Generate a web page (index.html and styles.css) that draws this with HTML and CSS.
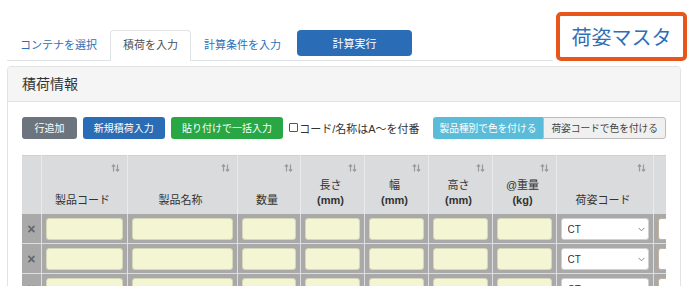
FILE: index.html
```html
<!DOCTYPE html>
<html lang="ja">
<head>
    <meta charset="UTF-8">
    <meta name="viewport" content="width=device-width, initial-scale=1.0">
    <title>積荷を入力</title>
    <link rel="stylesheet" href="styles.css">
</head>
<body>
    <div class="page">
        <div class="top-row">
            <ul class="nav-tabs">
                <li class="tab">コンテナを選択</li>
                <li class="tab active">積荷を入力</li>
                <li class="tab">計算条件を入力</li>
                <li><button class="btn-run">計算実行</button></li>
            </ul>
            <a class="master-link">荷姿マスタ</a>
        </div>

        <div class="card">
            <div class="card-header">積荷情報</div>
            <div class="card-body">
                <div class="toolbar">
                    <button class="btn btn-gray">行追加</button>
                    <button class="btn btn-blue">新規積荷入力</button>
                    <button class="btn btn-green">貼り付けで一括入力</button>
                    <label class="check-label"><input type="checkbox" class="check">コード/名称はA～を付番</label>
                    <div class="btn-group">
                        <button class="btn btn-teal">製品種別で色を付ける</button>
                        <button class="btn btn-light">荷姿コードで色を付ける</button>
                    </div>
                </div>

                <div class="table-wrap">
                    <table class="cargo">
                        <colgroup>
                            <col style="width:19px">
                            <col style="width:86px">
                            <col style="width:110px">
                            <col style="width:63px">
                            <col style="width:64px">
                            <col style="width:64px">
                            <col style="width:64px">
                            <col style="width:64px">
                            <col style="width:97px">
                            <col style="width:80px">
                        </colgroup>
                        <thead>
                            <tr id="head-row"></tr>
                        </thead>
                        <tbody id="cargo-body"></tbody>
                    </table>
                </div>
            </div>
        </div>
    </div>

    <script>
        // 見出し
        const columnas = [
            '', '製品コード', '製品名称', '数量',
            '長さ<br><b>(mm)</b>', '幅<br><b>(mm)</b>', '高さ<br><b>(mm)</b>',
            '@重量<br><b>(kg)</b>', '荷姿コード', ''
        ];
        const sortIcon = `<svg class="sort-icon" width="9" height="8" viewBox="0 0 9 8">
            <path d="M2.5 7.5V1M0.8 2.6L2.5 0.8L4.2 2.6M6.5 0.5V7M4.8 5.4L6.5 7.2L8.2 5.4" fill="none" stroke="#9a9a9a" stroke-width="1.2"/>
        </svg>`;

        const headRow = document.getElementById('head-row');
        columnas.forEach((col, i) => {
            const th = document.createElement('th');
            if (i > 0) {
                th.innerHTML = `<div class="th-inner">${sortIcon}<span class="th-label">${col}</span></div>`;
            } else {
                th.innerHTML = '<div class="th-inner"></div>';
            }
            headRow.appendChild(th);
        });

        // 行
        const tbody = document.getElementById('cargo-body');
        for (let r = 0; r < 3; r++) {
            const tr = document.createElement('tr');
            let html = '<td class="del">×</td>';
            for (let c = 0; c < 7; c++) {
                html += '<td><input class="cell-input" type="text"></td>';
            }
            html += `<td><div class="select-box"><select class="cell-select"><option>CT</option></select>
                <svg class="chevron" width="7" height="5" viewBox="0 0 7 5"><path d="M0.5 0.8L3.5 3.8L6.5 0.8" fill="none" stroke="#888" stroke-width="1"/></svg></div></td>`;
            html += '<td><input class="cell-input extra" type="text"></td>';
            tr.innerHTML = html;
            tbody.appendChild(tr);
        }
    </script>
</body>
</html>
```

FILE: styles.css
```css
body {
    margin: 0;
    font-family: "Liberation Sans", "Noto Sans CJK JP", sans-serif;
    color: #333;
    background-color: white;
}
.page {
    padding: 12px 13px 0 7px;
}
.top-row {
    display: flex;
    align-items: flex-end;
}
.nav-tabs {
    flex: 1;
    display: flex;
    align-items: flex-start;
    margin: 0;
    padding: 0;
    list-style: none;
    border-bottom: 1px solid #e0e3e6;
}
.tab {
    height: 29px;
    line-height: 29px;
    padding: 0 12px;
    font-size: 11px;
    color: #2f6fb5;
    border: 1px solid transparent;
    border-bottom: none;
    border-radius: 4px 4px 0 0;
    margin-bottom: -1px;
}
.tab.active {
    color: #495057;
    background-color: white;
    border-color: #e0e3e6;
    height: 30px;
}
.btn-run {
    margin-left: 3px;
    width: 115px;
    height: 26px;
    border: none;
    border-radius: 4px;
    background-color: #2a6cb5;
    color: white;
    font-family: inherit;
    font-size: 11px;
}
.master-link {
    width: 123px;
    height: 41px;
    margin-left: 3px;
    border: 4px solid #e8561c;
    border-radius: 5px;
    display: flex;
    align-items: center;
    justify-content: center;
    font-size: 20px;
    color: #2f6fb5;
}
.card {
    margin: 5px 6px 0 0;
    border: 1px solid #e2e2e2;
    border-radius: 4px;
    height: 240px;
}
.card-header {
    height: 34px;
    line-height: 35px;
    padding: 0 14px;
    font-size: 14px;
    background-color: #f5f5f5;
    border-bottom: 1px solid #e2e2e2;
    border-radius: 4px 4px 0 0;
}
.card-body {
    padding: 14px 14px 0 14px;
}
.toolbar {
    display: flex;
    align-items: center;
    height: 23px;
}
.btn {
    height: 22px;
    padding: 0 11px;
    border: none;
    border-radius: 3px;
    font-family: inherit;
    font-size: 10px;
    color: white;
    margin-right: 6px;
    white-space: nowrap;
}
.btn-gray {
    background-color: #6c757d;
    width: 55px;
}
.btn-blue {
    background-color: #2a6cb5;
}
.btn-green {
    background-color: #29a745;
    width: 113px;
}
.check-label {
    display: flex;
    align-items: center;
    font-size: 11px;
    color: #333;
    margin-left: -1px;
    white-space: nowrap;
}
.check {
    appearance: none;
    width: 9px;
    height: 9px;
    margin: 0 1px 0 1px;
    border: 1px solid #555;
    border-radius: 1px;
}
.btn-group {
    display: flex;
    margin-left: 13px;
}
.btn-group .btn {
    margin: 0;
    padding: 0 7px;
    font-size: 9.7px;
}
.btn-teal {
    background-color: #5bbcd9;
    border-radius: 3px 0 0 3px;
}
.btn-light {
    background-color: #f0f0f0;
    color: #444;
    border: 1px solid #bdbdbd;
    border-radius: 0 3px 3px 0;
}
.table-wrap {
    margin-top: 16px;
    overflow: hidden;
}
.cargo {
    border-collapse: collapse;
    table-layout: fixed;
    width: 711px;
    border-top: 1px solid #d0d0d0;
}
.cargo th {
    background-color: #dadbdc;
    border-left: 1px solid #e9e9e9;
    border-right: 1px solid #e9e9e9;
    font-weight: normal;
    font-size: 11px;
    padding: 0;
}
.cargo th:first-child {
    border-left: none;
}
.th-inner {
    display: flex;
    flex-direction: column;
    height: 58px;
    padding: 8px 7px 6px 4px;
    box-sizing: border-box;
}
.sort-icon {
    align-self: flex-end;
}
.th-label {
    margin-top: auto;
    text-align: center;
    line-height: 15px;
    color: #333;
}
.th-label b {
    font-family: "Liberation Sans", sans-serif;
}
.cargo td {
    background-color: #a9a9a9;
    border: 1px solid #dedede;
    border-top: none;
    padding: 4px 4px 3px 4px;
    height: 22px;
}
.cargo td:first-child {
    border-left: none;
}
.del {
    text-align: center;
    font-size: 14px;
    font-weight: bold;
    color: #5d6670;
}
.cell-input {
    display: block;
    width: 100%;
    height: 22px;
    box-sizing: border-box;
    border: 1px solid #d6d6b8;
    border-radius: 3px;
    background-color: #f4f5d2;
}
.cell-input.extra {
    background-color: white;
    border-color: #c4b29c;
}
.select-box {
    position: relative;
}
.cell-select {
    display: block;
    width: 100%;
    height: 22px;
    appearance: none;
    border: 1px solid #d0d0d0;
    border-radius: 3px;
    background-color: white;
    font-family: inherit;
    font-size: 10px;
    color: #333;
    padding: 0 6px;
}
.chevron {
    position: absolute;
    right: 4px;
    top: 9px;
}
```
